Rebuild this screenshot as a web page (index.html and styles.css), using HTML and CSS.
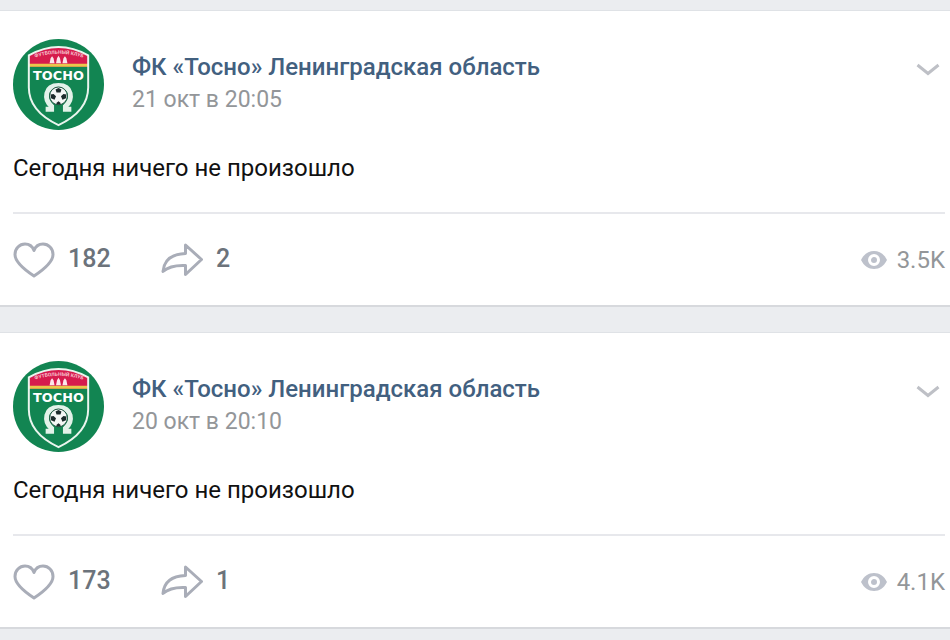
FILE: index.html
```
<!DOCTYPE html>
<html lang="ru">

<head>
  <meta charset="utf-8">
  <title>ФК «Тосно»</title>
  <meta name="viewport" content="width=device-width, initial-scale=1">
  <link rel="stylesheet" href="styles.css">
</head>

<body>

  <!-- shared icons -->
  <svg class="sprite" aria-hidden="true">
    <symbol id="icon-logo" viewBox="0 0 92 92">
      <circle cx="46" cy="46" r="46" fill="#128552" />
      <path d="M16 28V17Q31 8 46 8Q61 8 76 17V28Z" fill="#d61c4d" />
      <path d="M16 25H76V28H16Z" fill="#e9c84b" />
      <path d="M16 16.500Q31 8 46 8Q61 8 76 16.500V49C76 68 63 79 46 87C29 79 16 68 16 49Z" fill="none" stroke="#eaf5ee" stroke-width="2" />
      <path d="M37 24.500L38 19.500L39.500 17.500L41 19.500L42 24.500ZM43.500 24.500L44.500 19.500L46 17L47.500 19.500L48.500 24.500ZM50 24.500L51 19.500L52.500 17.500L54 19.500L55 24.500Z" fill="#fbe6ea" />
      <path d="M33 71H39V68C31 61 32 47 46 47C60 47 61 61 53 68V71H59" fill="none" stroke="#e3f2e9" stroke-width="5" />
      <circle cx="46" cy="57.500" r="9" fill="#f4f7f5" stroke="#174e39" />
      <path d="M43 51L46 49.500L49 51L48 54H44ZM38 56L41 55.500L43.500 58L42 61.500L38.500 60ZM54 56L51 55.500L48.500 58L50 61.500L53.500 60ZM43.500 65L46 63L48.500 65L46 66.500Z" fill="#1c2b2b" />
    </symbol>
    <symbol id="icon-chevron" viewBox="0 0 24 14">
      <path d="M1.500 2L12 10.500L22.500 2" fill="none" stroke="#bec0c6" stroke-width="3" />
    </symbol>
    <symbol id="icon-heart" viewBox="0 0 42 36">
      <path d="M21 34C15 30 2 21.500 2 12.500C2 6.500 6.500 2 12 2C16 2 19.500 4.500 21 8.500C22.500 4.500 26 2 30 2C35.500 2 40 6.500 40 12.500C40 21.500 27 30 21 34Z" fill="none" stroke="#a9adb8" stroke-width="3" stroke-linejoin="round" />
    </symbol>
    <symbol id="icon-share" viewBox="0 0 42 36">
      <path d="M24.500 3L40.500 17.500L24.500 32.500V23.500C14 23 7.500 24.500 2 29.500C3 18.500 10.500 12 24.500 11.500Z" fill="none" stroke="#a9adb8" stroke-width="3" stroke-linejoin="round" />
    </symbol>
    <symbol id="icon-eye" viewBox="0 0 26 18">
      <path d="M0 9C3 3 7.500 0 13 0S23 3 26 9C23 15 18.500 18 13 18S3 15 0 9Z" fill="#bdc1cb" />
      <circle cx="13" cy="9" r="4.500" fill="#bdc1cb" stroke="#fff" stroke-width="3" />
    </symbol>
  </svg>

  <main class="feed">

    <article class="post">
      <header class="post-header">
        <svg class="avatar" viewBox="0 0 92 92">
          <use href="#icon-logo" />
          <path id="arc-1" d="M19 20Q46 10 74 20" fill="none" />
          <text class="logo-club"><textPath href="#arc-1" startOffset="50%">ФУТБОЛЬНЫЙ КЛУБ</textPath></text>
          <text class="logo-name" x="46" y="41">ТОСНО</text>
        </svg>
        <div class="post-info">
          <a class="post-author" href="#">ФК «Тосно» Ленинградская область</a>
          <a class="post-date" href="#">21 окт в 20:05</a>
        </div>
        <button class="post-menu" type="button" aria-label="Меню">
          <svg class="chevron"><use href="#icon-chevron" /></svg>
        </button>
      </header>
      <p class="post-text">Сегодня ничего не произошло</p>
      <footer class="post-footer">
        <button class="action like" type="button" aria-label="Нравится 182">
          <svg class="action-icon"><use href="#icon-heart" /></svg>
          <span class="count">182</span>
        </button>
        <button class="action" type="button" aria-label="Поделиться 2">
          <svg class="action-icon"><use href="#icon-share" /></svg>
          <span class="count">2</span>
        </button>
        <div class="views">
          <svg class="eye"><use href="#icon-eye" /></svg>
          <span>3.5K</span>
        </div>
      </footer>
    </article>

    <article class="post">
      <header class="post-header">
        <svg class="avatar" viewBox="0 0 92 92">
          <use href="#icon-logo" />
          <path id="arc-2" d="M19 20Q46 10 74 20" fill="none" />
          <text class="logo-club"><textPath href="#arc-2" startOffset="50%">ФУТБОЛЬНЫЙ КЛУБ</textPath></text>
          <text class="logo-name" x="46" y="41">ТОСНО</text>
        </svg>
        <div class="post-info">
          <a class="post-author" href="#">ФК «Тосно» Ленинградская область</a>
          <a class="post-date" href="#">20 окт в 20:10</a>
        </div>
        <button class="post-menu" type="button" aria-label="Меню">
          <svg class="chevron"><use href="#icon-chevron" /></svg>
        </button>
      </header>
      <p class="post-text">Сегодня ничего не произошло</p>
      <footer class="post-footer">
        <button class="action like" type="button" aria-label="Нравится 173">
          <svg class="action-icon"><use href="#icon-heart" /></svg>
          <span class="count">173</span>
        </button>
        <button class="action" type="button" aria-label="Поделиться 1">
          <svg class="action-icon"><use href="#icon-share" /></svg>
          <span class="count">1</span>
        </button>
        <div class="views">
          <svg class="eye"><use href="#icon-eye" /></svg>
          <span>4.1K</span>
        </div>
      </footer>
    </article>

  </main>

</body>

</html>
```
FILE: styles.css
```
/* ******************** global ******************* */

* {
  box-sizing: border-box;
}

body {
  margin: 0;
  background-color: #ebedf0;
  color: #111;
  font-family: Roboto, "Noto Sans", sans-serif;
  font-size: 24px;
  line-height: 32px;
}

a {
  text-decoration: none;
}

button {
  padding: 0;
  border: none;
  background: none;
  font: inherit;
  cursor: pointer;
}

svg {
  display: block;
  flex: none;
}

.sprite {
  position: absolute;
  width: 0;
  height: 0;
}

/* ******************** feed ******************* */

.feed {
  display: flex;
  flex-direction: column;
  gap: 25px;
  padding: 10px 0 12px;
}

.post {
  padding: 28px 5px 0 13px;
  border-top: 1px solid #dfe2e6;
  border-bottom: 2px solid #d7d9dd;
  background-color: white;
}

/* ******************** header ******************* */

.post-header {
  display: flex;
  align-items: flex-start;
}

.avatar {
  width: 91px;
  height: 91px;
}

.logo-name {
  fill: white;
  font-family: "DejaVu Sans", sans-serif;
  font-size: 13px;
  font-weight: 700;
  text-anchor: middle;
}

.logo-club {
  fill: #f7c3cf;
  font-size: 5px;
  font-weight: 700;
  text-anchor: middle;
}

.post-info {
  display: flex;
  flex: 1;
  flex-direction: column;
  gap: 1px;
  padding: 12px 0 0 28px;
}

.post-author {
  color: #42607f;
  font-weight: 500;
}

.post-date {
  color: #939699;
  font-size: 23px;
}

.post-menu {
  margin-top: 24px;
  padding-right: 5px;
}

.chevron {
  width: 24px;
  height: 14px;
}

/* ******************** text ******************* */

.post-text {
  margin: 22px 0 28px;
}

/* ******************** footer ******************* */

.post-footer {
  display: flex;
  align-items: center;
  height: 93px;
  border-top: 2px solid #e7e8ec;
}

.action {
  display: flex;
  align-items: center;
  gap: 13px;
  color: #6c737b;
  font-weight: 500;
}

.like {
  min-width: 148px;
}

.action-icon {
  width: 42px;
  height: 36px;
}

.count {
  padding-bottom: 2px;
  font-size: 25px;
}

.views {
  display: flex;
  align-items: center;
  gap: 10px;
  margin-left: auto;
  color: #939699;
}

.eye {
  width: 26px;
  height: 18px;
}
```
